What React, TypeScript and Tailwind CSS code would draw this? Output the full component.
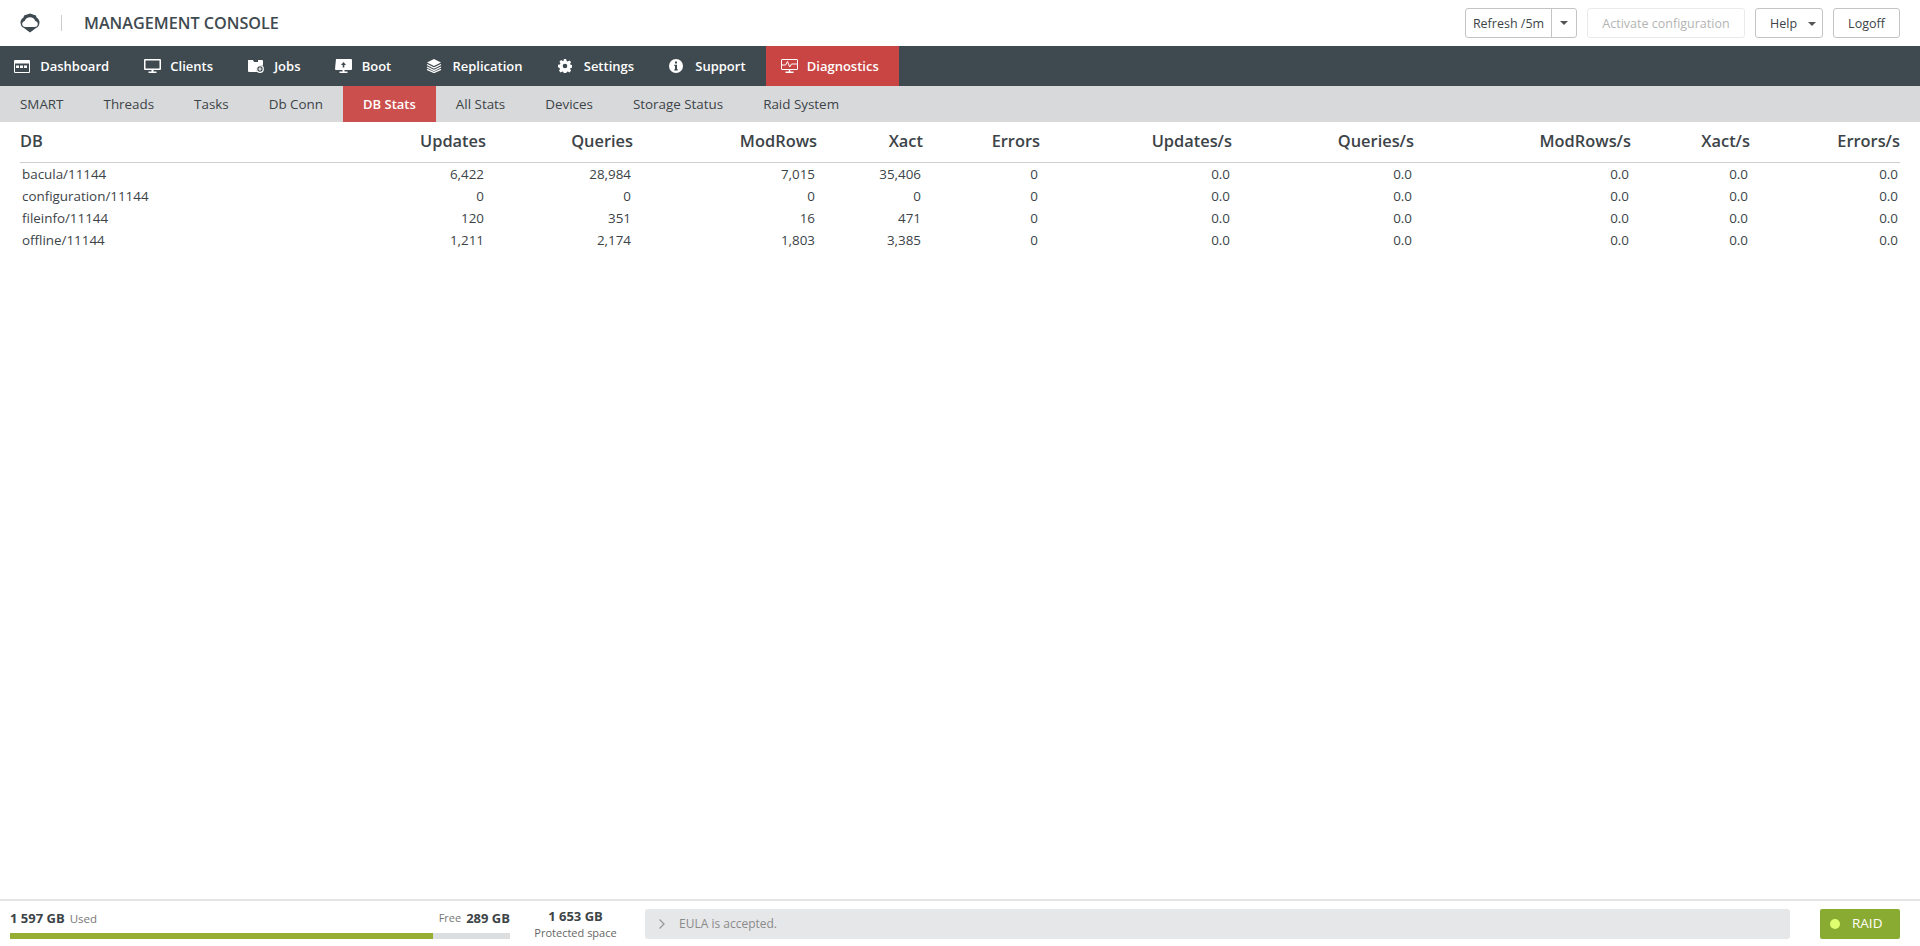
import React from 'react';

const font = { fontFamily: '"Open Sans", "Liberation Sans", sans-serif' };

const DashboardIcon = () => (
  <svg width="16" height="13" viewBox="0 0 16 13">
    <path fill="#fff" fillRule="evenodd" d="M1 0h14a1 1 0 0 1 1 1v11a1 1 0 0 1-1 1H1a1 1 0 0 1-1-1V1a1 1 0 0 1 1-1zM1 3.500V12h14V3.500z" />
    <rect x="2" y="5.500" width="3" height="2.500" fill="#fff" />
    <rect x="6" y="5.500" width="3" height="2.500" fill="#fff" />
    <rect x="10" y="5.500" width="3" height="2.500" fill="#fff" />
  </svg>
);

const ClientsIcon = () => (
  <svg width="17" height="14" viewBox="0 0 17 14">
    <path fill="#fff" fillRule="evenodd" d="M1 0h15a1 1 0 0 1 1 1v9a1 1 0 0 1-1 1H1a1 1 0 0 1-1-1V1a1 1 0 0 1 1-1zM1.500 1.500v8h14v-8z" />
    <rect x="7.500" y="11" width="2" height="2" fill="#fff" />
    <rect x="4.500" y="12.500" width="8" height="1.500" fill="#fff" />
  </svg>
);

const JobsIcon = () => (
  <svg width="16" height="14" viewBox="0 0 16 14">
    <path fill="#fff" d="M0 1h5l1 2h4V1h4a1 1 0 0 1 1 1v4.500a4.500 4.500 0 0 0-5.800 6.500H1a1 1 0 0 1-1-1z" />
    <circle cx="12" cy="10" r="3.300" fill="none" stroke="#fff" strokeWidth="1.200" />
    <path stroke="#fff" strokeWidth="1.100" d="M10.300 10h3.400M12 8.300v3.400" />
  </svg>
);

const BootIcon = () => (
  <svg width="17" height="14" viewBox="0 0 17 14">
    <path fill="#fff" d="M1 0h15a1 1 0 0 1 1 1v9a1 1 0 0 1-1 1H1a1 1 0 0 1-1-1z" />
    <rect x="7.500" y="11" width="2" height="2" fill="#fff" />
    <rect x="4.500" y="12.500" width="8" height="1.500" fill="#fff" />
    <path fill="#3f4a50" d="M8.500 3 11 6H9.300v2.500H7.700V6H6z" />
  </svg>
);

const ReplicationIcon = () => (
  <svg width="16" height="14" viewBox="0 0 16 14">
    <path fill="#fff" d="M8 0l7 3.500-7 3.500-7-3.500z" />
    <path fill="none" stroke="#fff" strokeWidth="1.300" d="M1 5.500l7 3.500 7-3.500M1 8l7 3.500L15 8M1 10.300l7 3.200 7-3.200" />
  </svg>
);

const SettingsIcon = () => (
  <svg width="14" height="14" viewBox="0 0 14 14">
    <path
      fill="#fff"
      fillRule="evenodd"
      d="M5.800 0h2.400l.4 1.900 1.100.5 1.700-1 1.700 1.700-1 1.600.5 1.100 1.900.4v2.400l-1.900.4-.5 1.100 1 1.700-1.700 1.700-1.700-1-1.100.5-.4 1.900H5.800l-.4-1.900-1.100-.5-1.600 1-1.700-1.700 1-1.700-.5-1.100L0 8.200V5.800l1.900-.4.500-1.100-1-1.600 1.700-1.700 1.600 1 1.100-.5zM7 4.700a2.300 2.300 0 1 0 0 4.600 2.300 2.300 0 0 0 0-4.600z"
    />
  </svg>
);

const SupportIcon = () => (
  <svg width="14" height="14" viewBox="0 0 14 14">
    <circle cx="7" cy="7" r="7" fill="#fff" />
    <rect x="6" y="2.500" width="2" height="2" fill="#3f4a50" />
    <path fill="#3f4a50" d="M5.300 5.700H8v4.600h.8v1.200H5.300v-1.200H6V6.900h-.7z" />
  </svg>
);

const DiagnosticsIcon = () => (
  <svg width="17" height="14" viewBox="0 0 17 14" fill="none" stroke="#fff">
    <path strokeWidth="1" d="M1 .5h15a.5.500 0 0 1 .5.500v9a.5.500 0 0 1-.5.500H1a.5.500 0 0 1-.5-.500V1A.5.500 0 0 1 1 .5z" />
    <path strokeWidth="1" d="M1 6h3.500l2-3.500 2.200 5.500 1.800-3H16" />
    <path strokeWidth="1.500" d="M8.500 10.500v2.500M4.500 13.300h8" />
  </svg>
);

// shield with a cloud cut out of it
const Logo = () => (
  <svg width="20" height="20" viewBox="0 0 20 20">
    <path fill="#3f4a50" d="M4 2.500 10 .5l6 2 .5 2c2 1.300 3 3 3 5 0 2.600-1.300 4.700-3.500 5.500L10 19.500 4 15C1.800 14.200.5 12.100.5 9.500c0-2 1-3.700 3-5z" />
    <path fill="#fff" d="M5.500 14C3.500 14 2.200 12.700 2.200 11c0-1.500 1-2.700 2.500-3C5.300 5.800 7.500 4.300 10 4.300s4.700 1.500 5.300 3.700c1.500.3 2.500 1.500 2.500 3 0 1.700-1.300 3-3.300 3z" />
  </svg>
);

const Caret = () => <span className="inline-block w-0 h-0 border-x-[4px] border-x-transparent border-t-[4px] border-t-[#555]" />;

const navItems = [
  { label: 'Dashboard', icon: <DashboardIcon /> },
  { label: 'Clients', icon: <ClientsIcon /> },
  { label: 'Jobs', icon: <JobsIcon /> },
  { label: 'Boot', icon: <BootIcon /> },
  { label: 'Replication', icon: <ReplicationIcon /> },
  { label: 'Settings', icon: <SettingsIcon /> },
  { label: 'Support', icon: <SupportIcon /> },
  { label: 'Diagnostics', icon: <DiagnosticsIcon />, active: true },
];

const subItems = ['SMART', 'Threads', 'Tasks', 'Db Conn', 'DB Stats', 'All Stats', 'Devices', 'Storage Status', 'Raid System'];

const columns = [
  { name: 'DB', width: 'w-[300px]' },
  { name: 'Updates', width: 'w-[166px]' },
  { name: 'Queries', width: 'w-[147px]' },
  { name: 'ModRows', width: 'w-[184px]' },
  { name: 'Xact', width: 'w-[106px]' },
  { name: 'Errors', width: 'w-[117px]' },
  { name: 'Updates/s', width: 'w-[192px]' },
  { name: 'Queries/s', width: 'w-[182px]' },
  { name: 'ModRows/s', width: 'w-[217px]' },
  { name: 'Xact/s', width: 'w-[119px]' },
  { name: 'Errors/s', width: 'w-[150px]' },
];

const rows = [
  ['bacula/11144', '6,422', '28,984', '7,015', '35,406', '0', '0.0', '0.0', '0.0', '0.0', '0.0'],
  ['configuration/11144', '0', '0', '0', '0', '0', '0.0', '0.0', '0.0', '0.0', '0.0'],
  ['fileinfo/11144', '120', '351', '16', '471', '0', '0.0', '0.0', '0.0', '0.0', '0.0'],
  ['offline/11144', '1,211', '2,174', '1,803', '3,385', '0', '0.0', '0.0', '0.0', '0.0', '0.0'],
];

export default function App() {
  return (
    <div className="h-[946px] flex flex-col bg-white text-[#3c4448] overflow-hidden" style={font}>
      <header className="h-[46px] flex items-center justify-between pl-[20px] pr-[20px] shrink-0">
        <div className="flex items-center">
          <Logo />
          <div className="w-px h-[16px] bg-[#ccc] ml-[21px] mr-[22px]" />
          <span className="text-[16.2px] font-semibold text-[#3f4a50]">MANAGEMENT CONSOLE</span>
        </div>
        <div className="flex items-center gap-[10px] text-[12.5px] leading-[30px]">
          <div className="flex h-[30px] w-[112px] border border-[#c4c4c4] rounded-[3px]">
            <span className="w-[86px] flex items-center justify-center border-r border-[#c4c4c4] pt-px">Refresh /5m</span>
            <span className="flex-1 flex items-center justify-center"><Caret /></span>
          </div>
          <div className="h-[30px] w-[158px] flex items-center justify-center border border-[#eaeaea] rounded-[3px] text-[#b4b4b4] pt-px">Activate configuration</div>
          <div className="h-[30px] w-[68px] flex items-center gap-[11px] pl-[14px] border border-[#c4c4c4] rounded-[3px] pt-px">
            <span>Help</span>
            <Caret />
          </div>
          <div className="h-[30px] w-[67px] flex items-center justify-center border border-[#c4c4c4] rounded-[3px] pt-px">Logoff</div>
        </div>
      </header>

      <nav className="h-[40px] flex bg-[#3f4a50] shrink-0">
        {navItems.map((item) => (
          <div
            key={item.label}
            className={`flex items-center pl-[15px] pr-[20px] first:pl-[14px] text-[13px] font-semibold text-white ${item.active ? 'bg-[#c94543]' : ''}`}
          >
            <span className="w-[26.2px] flex items-center">{item.icon}</span>
            <span className="pt-[2px]">{item.label}</span>
          </div>
        ))}
      </nav>

      <div className="h-[36px] flex bg-[#d8d9db] shrink-0">
        {subItems.map((item) => (
          <div
            key={item}
            className={`flex items-center px-[20px] pt-px ${item === 'DB Stats' ? 'bg-[#cb4f4d] text-white font-semibold text-[13px]' : 'text-[#3c4448] text-[13.4px]'}`}
          >
            {item}
          </div>
        ))}
      </div>

      <main className="flex-1 px-[20px]">
        <table className="w-[1880px] table-fixed border-collapse">
          <thead>
            <tr className="h-[40px] border-b border-[#cfcfcf]">
              {columns.map((col, i) => (
                <th key={col.name} className={`${col.width} text-[16.4px] font-semibold ${i === 0 ? 'text-left' : 'text-right'}`}>
                  {col.name}
                </th>
              ))}
            </tr>
          </thead>
          <tbody>
            {rows.map((row) => (
              <tr key={row[0]} className="h-[22px]">
                {row.map((cell, i) => (
                  <td key={i} className={`text-[13.4px] leading-[18px] pt-[2px] ${i === 0 ? 'text-left pl-[2px]' : 'text-right pr-[2px]'}`}>
                    {cell}
                  </td>
                ))}
              </tr>
            ))}
          </tbody>
        </table>
      </main>

      <footer className="h-[47px] flex items-center border-t-2 border-[#e4e4e4] pl-[10px] pr-[20px] shrink-0">
        <div className="w-[500px] flex flex-col">
          <div className="flex items-center justify-between h-[20px]">
            <div className="flex items-center gap-[5px]">
              <span className="text-[13px] font-bold">1 597 GB</span>
              <span className="text-[11.5px] text-[#777]">Used</span>
            </div>
            <div className="flex items-center gap-[5px]">
              <span className="text-[11px] text-[#777]">Free</span>
              <span className="text-[13px] font-bold">289 GB</span>
            </div>
          </div>
          <div className="h-[6px] mt-[4px] bg-[#dcdee0]">
            <div className="h-full bg-[#97ae35]" style={{ width: `${(423 / 500) * 100}%` }} />
          </div>
        </div>
        <div className="w-[135px] pr-[4px] flex flex-col items-center">
          <span className="text-[13px] font-bold leading-[18px]">1 653 GB</span>
          <span className="text-[11px] text-[#666] leading-[16px]">Protected space</span>
        </div>
        <div className="w-[1145px] h-[30px] flex items-center gap-[13px] pl-[13px] bg-[#e6e7e9] rounded-[3px] text-[12px] text-[#8a8a8a]">
          <svg width="8" height="12" viewBox="0 0 8 12" fill="none" stroke="#999" strokeWidth="1.300">
            <path d="M1.500 1.500 6 6l-4.500 4.500" />
          </svg>
          <span>EULA is accepted.</span>
        </div>
        <div className="ml-[30px] w-[80px] h-[30px] flex items-center gap-[12px] pl-[10px] bg-[#8aab32] rounded-[2px] text-[13.5px] text-white">
          <span className="w-[10px] h-[10px] rounded-full bg-[#e0ff70]" />
          <span>RAID</span>
        </div>
      </footer>
    </div>
  );
}
